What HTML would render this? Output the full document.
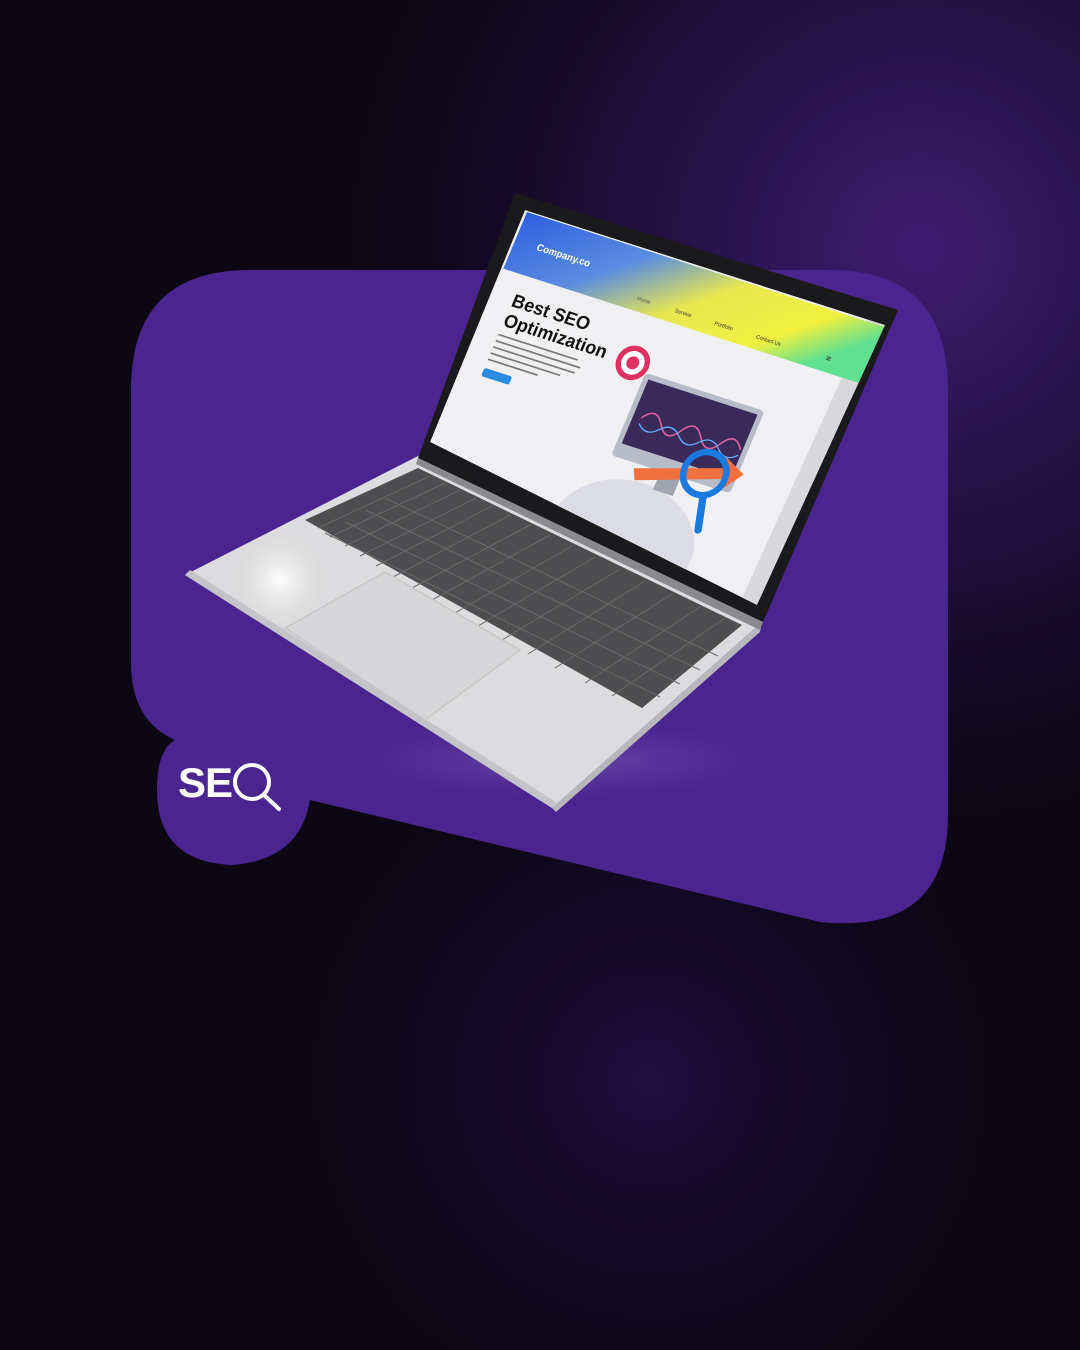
<!DOCTYPE html>
<html><head><meta charset="utf-8"><style>
html,body{margin:0;padding:0;width:1080px;height:1350px;overflow:hidden;background:#0b0713}
svg{display:block}
text{font-family:"Liberation Sans",sans-serif}
</style></head><body>
<svg width="1080" height="1350" viewBox="0 0 1080 1350" xmlns="http://www.w3.org/2000/svg">
<defs>
<radialGradient id="bg1" cx="920" cy="250" r="650" gradientUnits="userSpaceOnUse">
<stop offset="0" stop-color="#3e1d70"/><stop offset="0.5" stop-color="#1d0e38"/><stop offset="1" stop-color="#0b0713" stop-opacity="0"/></radialGradient>
<radialGradient id="bg2" cx="650" cy="1080" r="450" gradientUnits="userSpaceOnUse">
<stop offset="0" stop-color="#1f0e40"/><stop offset="1" stop-color="#0b0713" stop-opacity="0"/></radialGradient>
<linearGradient id="hdr" x1="0" y1="0" x2="1" y2="0.2">
<stop offset="0" stop-color="#2f5ee0"/><stop offset="0.35" stop-color="#5a8de0"/><stop offset="0.6" stop-color="#e8e850"/><stop offset="0.85" stop-color="#f0f040"/><stop offset="1" stop-color="#60e090"/></linearGradient>
<radialGradient id="shadow" cx="560" cy="760" r="260" gradientUnits="userSpaceOnUse" gradientTransform="translate(560 760) scale(1 0.18) translate(-560 -760)">
<stop offset="0" stop-color="#6a4aa8"/><stop offset="1" stop-color="#4a2590" stop-opacity="0"/></radialGradient>
<radialGradient id="glow" cx="280" cy="580" r="45" gradientUnits="userSpaceOnUse">
<stop offset="0" stop-color="#ffffff"/><stop offset="1" stop-color="#e2e2e2" stop-opacity="0"/></radialGradient>
<clipPath id="sq"><polygon points="525,210 885,325 757,605 430,442"/></clipPath>
</defs>
<rect width="1080" height="1350" fill="#0b0713"/>
<rect width="1080" height="1350" fill="url(#bg1)"/>
<rect width="1080" height="1350" fill="url(#bg2)"/>
<path d="M250 270 L830 270 Q948 270 948 390 L948 815 Q948 935 820 922 L310 800 Q300 860 232 865 Q157 862 157 790 Q157 750 175 740 Q130 720 131 660 L131 390 Q131 270 250 270 Z" fill="#4a2590"/>
<rect x="131" y="680" width="817" height="160" fill="url(#shadow)"/>
<polygon points="185,575 420,455 762,622 552,808" fill="#dcdcde"/>
<polygon points="185,575 552,808 556,802 190,570" fill="#c4c4c8"/>
<polygon points="552,808 762,622 760,632 556,812" fill="#b8b8bc"/>
<polygon points="305,520 418,468 742,625 642,708" fill="#4e4e50"/>
<g stroke="#6a6a6c" stroke-width="1">
<line x1="318" y1="528" x2="430" y2="476"/><line x1="330" y1="537" x2="445" y2="483"/>
<line x1="345" y1="546" x2="460" y2="490"/><line x1="360" y1="556" x2="476" y2="498"/>
<line x1="376" y1="566" x2="492" y2="506"/><line x1="393" y1="577" x2="510" y2="515"/>
<line x1="412" y1="588" x2="530" y2="525"/><line x1="432" y1="600" x2="550" y2="535"/>
<line x1="455" y1="613" x2="572" y2="546"/><line x1="478" y1="626" x2="595" y2="557"/>
<line x1="502" y1="640" x2="620" y2="569"/><line x1="528" y1="654" x2="645" y2="581"/>
<line x1="555" y1="668" x2="672" y2="594"/><line x1="585" y1="683" x2="700" y2="607"/>
<line x1="612" y1="696" x2="725" y2="618"/>
<line x1="325" y1="533" x2="660" y2="697"/><line x1="345" y1="522" x2="680" y2="684"/>
<line x1="365" y1="510" x2="700" y2="670"/><line x1="385" y1="498" x2="718" y2="656"/>
</g>
<polygon points="285,628 385,572 520,650 425,720" fill="#d6d6d8" stroke="#c6c6c8" stroke-width="1.5"/>
<rect x="180" y="520" width="200" height="120" fill="url(#glow)"/>
<polygon points="515,193 898,310 763,622 418,458" fill="#1a1a1c"/>
<polygon points="418,458 763,622 760,630 416,464" fill="#8a8a8e"/>
<g clip-path="url(#sq)">
<polygon points="525,210 885,325 757,605 430,442" fill="#f0f0f2"/>
<polygon points="868,320 885,325 757,605 742,598" fill="#d8d8dc"/>
<g transform="matrix(0.992 0.319 -0.43 1.03 527 212)">
<rect x="0" y="0" width="360" height="55" fill="url(#hdr)"/>
<text x="22" y="30" font-size="9" font-weight="bold" fill="#fff">Company.co</text>
<text x="130" y="45" font-size="5" fill="#555">Home</text>
<text x="168" y="45" font-size="5" fill="#333">Service</text>
<text x="208" y="45" font-size="5" fill="#333">Portfolio</text>
<text x="250" y="45" font-size="5" fill="#333">Contact Us</text>
<text x="320" y="45" font-size="8" fill="#222">≡</text>
<text x="20" y="85" font-size="17" font-weight="bold" fill="#111">Best SEO</text>
<text x="20" y="104" font-size="17" font-weight="bold" fill="#111">Optimization</text>
<g fill="#777"><rect x="20" y="112" width="80" height="1.5"/><rect x="20" y="118" width="85" height="1.5"/><rect x="20" y="124" width="82" height="1.5"/><rect x="20" y="130" width="70" height="1.5"/><rect x="20" y="136" width="50" height="1.5"/></g>
<rect x="20" y="145" width="28" height="8" rx="2" fill="#2a8ae0"/>
<ellipse cx="205" cy="255" rx="70" ry="55" fill="#dcdce4"/>
<rect x="165" y="105" width="120" height="80" rx="4" fill="#b8bcc8"/>
<rect x="170" y="110" width="110" height="62" fill="#3a2a5a"/>
<path d="M178 145 q10-15 20 0 t20 0 t20 0 t20 0 t20 0" stroke="#e060a0" stroke-width="1.5" fill="none"/>
<path d="M178 150 q10 10 20 0 t20 0 t20 0 t20 0 t20 0" stroke="#60b0ff" stroke-width="1.2" fill="none"/>
<rect x="215" y="185" width="20" height="18" fill="#a0a4b0"/>
<circle cx="150" cy="100" r="16" fill="#e03060"/><circle cx="150" cy="100" r="11" fill="#fff"/><circle cx="150" cy="100" r="6" fill="#e03060"/>
<polygon points="190,190 270,165 268,155 290,165 275,185 272,175 195,200" fill="#f07040"/>
<circle cx="255" cy="175" r="20" fill="none" stroke="#1a7ae0" stroke-width="6"/>
<line x1="262" y1="195" x2="270" y2="225" stroke="#1a7ae0" stroke-width="7" stroke-linecap="round"/>
</g>
</g>
<text x="178" y="797" font-size="42" font-weight="bold" fill="#fff" letter-spacing="-1">SE</text>
<circle cx="252" cy="782" r="17" fill="none" stroke="#fff" stroke-width="4"/>
<line x1="264" y1="795" x2="279" y2="809" stroke="#fff" stroke-width="4" stroke-linecap="round"/>
</svg>
</body></html>
